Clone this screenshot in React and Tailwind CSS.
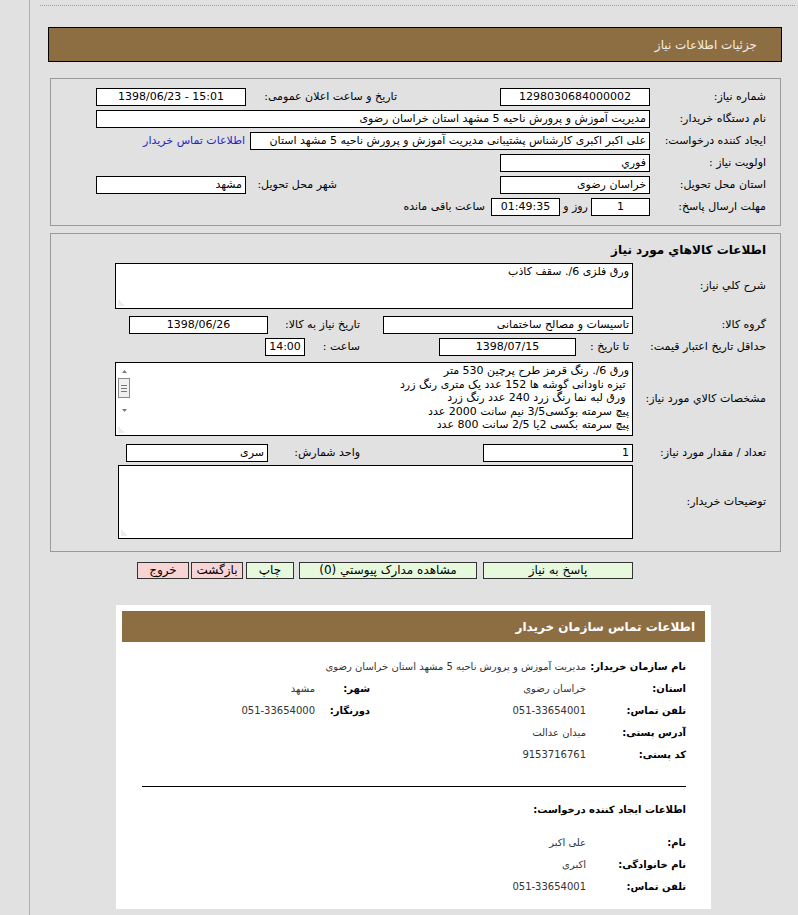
import React from 'react';

// small input-looking box
const Box = ({ className = '', center = false, ltr = false, children }) => (
  <div
    dir={ltr ? 'ltr' : undefined}
    className={`h-[18px] shrink-0 overflow-hidden whitespace-nowrap border border-black bg-white px-[3px] leading-[16px] ${
      center ? 'text-center' : 'text-right'
    } ${className}`}
  >
    {children}
  </div>
);

const Grip = () => (
  <svg width="7" height="7" className="absolute bottom-[2px] left-[2px]" viewBox="0 0 7 7">
    {[
      [1, 6],
      [3, 6],
      [5, 6],
      [1, 4],
      [3, 4],
      [1, 2],
    ].map(([x, y], i) => (
      <rect key={i} x={x - 0.5} y={y - 0.5} width="1" height="1" fill="#b5b5b5" />
    ))}
  </svg>
);

const Area = ({ className = '', children, scroll = false }) => (
  <div className={`relative flex shrink-0 border border-black bg-white ${className}`}>
    <div className="flex-1 overflow-hidden px-[3px] pt-[1px] text-right leading-[13.5px]">{children}</div>
    {scroll && (
      <div className="flex w-[16px] shrink-0 flex-col items-center pt-[4px]">
        <svg width="9" height="8" viewBox="0 0 9 8">
          <path d="M2 6 L4.5 3 L7 6 Z" fill="#7a7a7a" />
        </svg>
        <div className="mt-[3px] flex h-[20px] w-[12px] flex-col items-center justify-center gap-[2px] border border-[#8a8a8a] bg-[#f1f1f1]">
          <div className="h-px w-[6px] bg-[#777]" />
          <div className="h-px w-[6px] bg-[#777]" />
          <div className="h-px w-[6px] bg-[#777]" />
        </div>
        <svg width="9" height="8" viewBox="0 0 9 8" className="mt-[9px]">
          <path d="M2 2 L4.5 5 L7 2 Z" fill="#7a7a7a" />
        </svg>
      </div>
    )}
    <Grip />
  </div>
);

const Row = ({ className = '', children }) => (
  <div className={`flex h-[22px] items-center whitespace-nowrap ${className}`}>{children}</div>
);

const InfoRow = ({ label, value, label2, value2 }) => (
  <div className="flex h-[22px] items-center whitespace-nowrap">
    <div className="w-[100px] shrink-0 font-bold text-[10px] text-black">{label}</div>
    <div className="w-[216px] shrink-0 text-[10px] text-[#333]">{value}</div>
    {label2 && (
      <>
        <div className="w-[55px] shrink-0 font-bold text-[10px] text-black">{label2}</div>
        <div className="text-[10px] text-[#333]">{value2}</div>
      </>
    )}
  </div>
);

export default function App() {
  return (
    <div className="min-h-[915px] bg-[#e1e1e1] font-['DejaVu_Sans',sans-serif] text-[11px] text-black">
      <div className="ml-[29px] min-h-[915px] border-l border-[#b0b0b0] pt-[5px]">
        <div className="ml-[10px] mr-[3px] border-t border-dotted border-[#9a9a9a]" />

        <div className="ml-[18px] mr-[16px] mt-[21px]">
          {/* header */}
          <div dir="rtl" className="flex h-[35px] items-center border border-black bg-[#8d6d42] pr-[24px] text-[12px] text-[#f4eee2]">
            جزئیات اطلاعات نیاز
          </div>

          {/* panel 1 */}
          <div dir="rtl" className="ml-[2px] mr-[1px] mt-[16px] border border-[#9a9a9a] pb-[7px] pt-[7px]">
            <Row>
              <div className="w-[130px] shrink-0 pr-[14px]">شماره نیاز:</div>
              <Box center className="w-[150px]">1298030684000002</Box>
              <div className="w-[254px] shrink-0 pr-[103px]">تاریخ و ساعت اعلان عمومی:</div>
              <Box center ltr className="w-[150px]">1398/06/23 - 15:01</Box>
            </Row>
            <Row>
              <div className="w-[130px] shrink-0 pr-[14px]">نام دستگاه خریدار:</div>
              <Box className="w-[554px]">مدیریت آموزش و پرورش ناحیه 5 مشهد استان خراسان رضوی</Box>
            </Row>
            <Row>
              <div className="w-[130px] shrink-0 pr-[14px]">ایجاد کننده درخواست:</div>
              <Box className="w-[400px]">
                علی اکبر اکبری کارشناس پشتیبانی مدیریت آموزش و پرورش ناحیه 5 مشهد استان
              </Box>
              <a className="mr-[5px] text-[#2323c8]">اطلاعات تماس خریدار</a>
            </Row>
            <Row>
              <div className="w-[130px] shrink-0 pr-[14px]">اولویت نیاز :</div>
              <Box className="w-[150px]">فوري</Box>
            </Row>
            <Row>
              <div className="w-[130px] shrink-0 pr-[14px]">استان محل تحویل:</div>
              <Box className="w-[150px]">خراسان رضوی</Box>
              <div className="w-[254px] shrink-0 pr-[163px]">شهر محل تحویل:</div>
              <Box className="w-[150px]">مشهد</Box>
            </Row>
            <Row>
              <div className="w-[130px] shrink-0 pr-[14px]">مهلت ارسال پاسخ:</div>
              <Box center className="w-[59px]">1</Box>
              <div className="w-[31px] shrink-0 text-center">روز و</div>
              <Box center className="w-[69px]">01:49:35</Box>
              <div className="mr-[6px]">ساعت باقی مانده</div>
            </Row>
          </div>

          {/* panel 2 */}
          <div dir="rtl" className="ml-[2px] mr-[1px] mt-[7px] border border-[#9a9a9a] pb-[12px] pt-[8px]">
            <div className="h-[16px] pr-[14px] text-[12px] font-bold leading-[16px]">اطلاعات کالاهاي مورد نياز</div>

            <div className="mt-[5px] flex items-center">
              <div className="w-[147px] shrink-0 pr-[14px]">شرح کلي نياز:</div>
              <Area className="h-[46px] w-[518px]">ورق فلزی 6/. سقف کاذب</Area>
            </div>

            <Row className="mt-[5px]">
              <div className="w-[147px] shrink-0 pr-[14px]">گروه کالا:</div>
              <Box className="w-[250px]">تاسیسات و مصالح ساختمانی</Box>
              <div className="w-[115px] shrink-0 pr-[23px]">تاریخ نیاز به کالا:</div>
              <Box center className="w-[139px]">1398/06/26</Box>
            </Row>

            <Row>
              <div className="w-[147px] shrink-0 pr-[14px]">حداقل تاریخ اعتبار قیمت:</div>
              <div className="w-[57px] shrink-0 pr-[4px]">تا تاریخ :</div>
              <Box center className="w-[137px]">1398/07/15</Box>
              <div className="w-[134px] shrink-0 pr-[79px]">ساعت :</div>
              <Box center className="w-[40px]">14:00</Box>
            </Row>

            <div className="mt-[4px] flex items-center">
              <div className="w-[147px] shrink-0 pr-[14px]">مشخصات کالاي مورد نياز:</div>
              <Area scroll className="h-[74px] w-[518px]">
                <div>ورق 6/. رنگ قرمز طرح پرچین 530 متر</div>
                <div>&nbsp;تیزه ناودانی گوشه ها 152 عدد یک متری رنگ زرد</div>
                <div>&nbsp;ورق لبه نما رنگ زرد 240 عدد رنگ زرد</div>
                <div>پیچ سرمته بوکسی3/5 نیم سانت 2000 عدد</div>
                <div>پیچ سرمته بکسی 2یا 2/5 سانت 800 عدد</div>
              </Area>
            </div>

            <Row className="mt-[6px]">
              <div className="w-[147px] shrink-0 pr-[14px]">تعداد / مقدار مورد نیاز:</div>
              <Box className="w-[150px]">1</Box>
              <div className="w-[215px] shrink-0 pr-[123px]">واحد شمارش:</div>
              <Box className="w-[142px]">سری</Box>
            </Row>

            <div className="mt-[1px] flex items-center">
              <div className="w-[147px] shrink-0 pr-[14px]">توضیحات خریدار:</div>
              <Area className="h-[74px] w-[515px]" />
            </div>
          </div>

          {/* buttons */}
          <div dir="rtl" className="mt-[10px] flex pr-[149px] text-[12px]">
            <div className="h-[17px] w-[150px] border border-[#333] bg-[#e6f9dd] text-center leading-[15px]">پاسخ به نیاز</div>
            <div className="mr-[6px] h-[17px] w-[178px] border border-[#333] bg-[#e6f9dd] text-center leading-[15px]">
              مشاهده مدارک پیوستي (0)
            </div>
            <div className="mr-[5px] h-[17px] w-[48px] border border-[#333] bg-[#e6f9dd] text-center leading-[15px]">چاپ</div>
            <div className="mr-[3px] h-[17px] w-[52px] border border-[#333] bg-[#f9d4d4] text-center leading-[15px]">بازگشت</div>
            <div className="mr-[2px] h-[17px] w-[52px] border border-[#333] bg-[#f9d4d4] text-center leading-[15px]">خروج</div>
          </div>

          {/* buyer contact */}
          <div dir="rtl" className="ml-[68px] mt-[26px] w-[595px] bg-white px-[6px] pb-[12px] pt-[6px]">
            <div className="flex h-[31px] items-center bg-[#8d6d42] pr-[10px] text-[12px] font-bold text-white">
              اطلاعات تماس سازمان خریدار
            </div>
            <div className="mt-[13px] pr-[19px]">
              <InfoRow label="نام سازمان خریدار:" value="مدیریت آموزش و پرورش ناحیه 5 مشهد استان خراسان رضوی" />
              <InfoRow label="استان:" value="خراسان رضوی" label2="شهر:" value2="مشهد" />
              <InfoRow label="تلفن تماس:" value="051-33654001" label2="دورنگار:" value2="051-33654000" />
              <InfoRow label="آدرس پستی:" value="میدان عدالت" />
              <InfoRow label="کد پستی:" value="9153716761" />
            </div>
            <div className="ml-[20px] mr-[19px] mt-[21px] border-t border-black" />
            <div className="mt-[11px] flex h-[22px] items-center pr-[19px] text-[10px] font-bold">
              اطلاعات ایجاد کننده درخواست:
            </div>
            <div className="mt-[11px] pr-[19px]">
              <InfoRow label="نام:" value="علی اکبر" />
              <InfoRow label="نام خانوادگی:" value="اکبری" />
              <InfoRow label="تلفن تماس:" value="051-33654001" />
            </div>
          </div>
        </div>
      </div>
    </div>
  );
}
